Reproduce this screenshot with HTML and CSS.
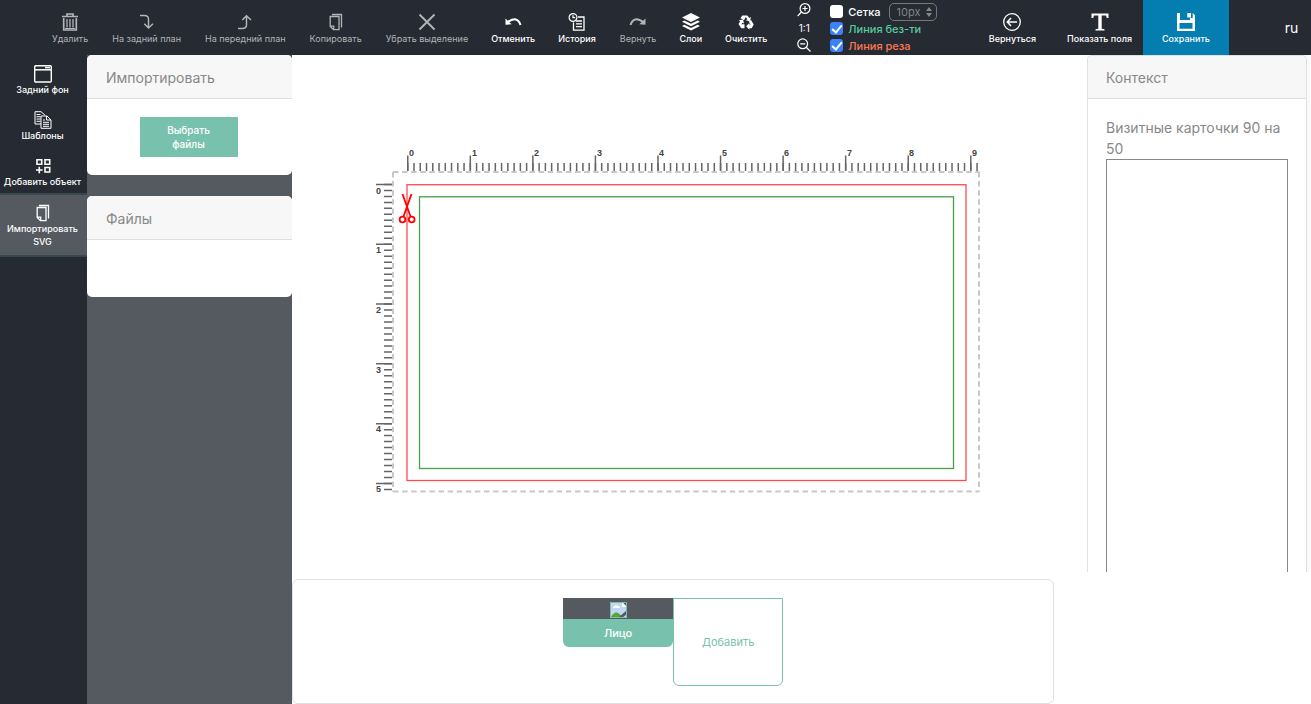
FILE: index.html
```html
<!DOCTYPE html>
<html lang="ru">
<head>
<meta charset="utf-8">
<title>Редактор визитных карточек</title>
<link rel="stylesheet" href="styles.css">
</head>
<body>
<header class="toolbar">
  <div class="tools">
    <button class="tool muted" type="button">
      <svg class="icon" viewBox="0 0 18 18"><path d="M1 3.500h16M6 3V1h6v2M2.700 5v12h12.600V5" stroke-width="1.700"/><path d="M6 6v8.500M9 6v8.500M12 6v8.500" stroke-width="1.300"/><path d="M4 15.500h10"/></svg>
      <span>Удалить</span></button>
    <button class="tool muted" type="button">
      <svg class="icon" viewBox="0 0 18 18"><path d="M2 2.500h4.500q4 0 4 4V15M6.300 10.800l4.200 4.200 4.500-4.200" stroke-width="1.500"/></svg>
      <span>На задний план</span></button>
    <button class="tool muted" type="button">
      <svg class="icon" viewBox="0 0 18 18"><path d="M2 15.500h4.500q4 0 4-4V3M6.300 7l4.200-4.200L15 7" stroke-width="1.500"/></svg>
      <span>На передний план</span></button>
    <button class="tool muted" type="button">
      <svg class="icon" viewBox="0 0 18 18"><path d="M3.200 3.500H12v13.200H6.500L3.200 13.500zM3.200 13.200h3.500v3.500M5 1.500h9.500v13" stroke-width="1.300"/></svg>
      <span>Копировать</span></button>
    <button class="tool muted" type="button">
      <svg class="icon" viewBox="0 0 18 18"><path d="M1.500 1.500l15 15M16.500 1.500l-15 15" stroke-width="1.900"/></svg>
      <span>Убрать выделение</span></button>
    <button class="tool strong" type="button">
      <svg class="icon" viewBox="0 0 18 18"><path d="M3.500 9.300Q13.500 2.200 16.500 12" stroke-width="2"/><path class="solid" d="M1.500 5.600v6.200l6.200-.5z"/></svg>
      <span>Отменить</span></button>
    <button class="tool strong" type="button">
      <svg class="icon" viewBox="0 0 18 18"><circle cx="5" cy="4.500" r="3.900" stroke-width="1.200"/><path d="M5 2.200v2.500h2.200M10 4h6v13.200H5.500V9.500M8 8h6M8 10.800h6M8 13.600h6" stroke-width="1.300"/></svg>
      <span>История</span></button>
    <button class="tool muted" type="button">
      <svg class="icon" viewBox="0 0 18 18"><path d="M14.500 9.300Q4.500 2.200 1.500 12" stroke-width="2"/><path class="solid" d="M16.500 5.600v6.200l-6.200-.5z"/></svg>
      <span>Вернуть</span></button>
    <button class="tool strong" type="button">
      <svg class="icon" viewBox="0 0 18 18"><path class="solid" d="M9 0l9 4.500L9 9 0 4.500zM0 8.700l2.400-1.200L9 10.700l6.600-3.200L18 8.700l-9 4.500zM0 12.900l2.400-1.200L9 14.900l6.600-3.200 2.400 1.200-9 4.600z"/></svg>
      <span>Слои</span></button>
    <button class="tool strong" type="button">
      <svg class="icon" viewBox="0 0 18 18"><path class="solid" d="M5.300 2.500h5l2 2.400 1.700-.8-1 4.200-4.300-1.100 1.600-.9-1.500-2.200L7 7.200 3.500 5.300zM1.700 7.200l4.300-.6 1 4-1.600-.8-.9 1.500h3v4H4.200L1.500 11l1.700-2.800zM14 7l2.700 4.500-2 3.800h-2.300v1.400L9.100 13.300l3.300-3.200v1.400h1.300l-2-3z"/></svg>
      <span>Очистить</span></button>
  </div>
  <div class="zoom">
    <button type="button" aria-label="Увеличить"><svg class="lens" viewBox="0 0 14 14"><circle cx="8" cy="5.500" r="4.900"/><path d="M4.500 9L.7 13M5.500 5.500h5M8 3v5"/></svg></button>
    <button type="button">1:1</button>
    <button type="button" aria-label="Уменьшить"><svg class="lens" viewBox="0 0 14 14"><circle cx="5.700" cy="5.800" r="4.900"/><path d="M9.200 9.300L13.500 13.500M3.200 5.800h5"/></svg></button>
  </div>
  <div class="options">
    <div class="option"><input type="checkbox" id="grid"><label for="grid">Сетка</label>
      <span class="size"><select aria-label="Шаг сетки" disabled><option>10px</option></select>
        <svg class="arrows" viewBox="0 0 6 10"><path d="M0 4l3-4 3 4zM0 6h6l-3 4z"/></svg></span></div>
    <div class="option safe"><input type="checkbox" id="safe" checked><label for="safe">Линия без-ти</label></div>
    <div class="option cut"><input type="checkbox" id="cut" checked><label for="cut">Линия реза</label></div>
  </div>
  <div class="actions">
    <button class="tool strong" type="button">
      <svg class="icon" viewBox="0 0 18 18"><circle cx="9" cy="9" r="8.300" stroke-width="1.300"/><path d="M14 9H4.500M8 5L4.300 9 8 13" stroke-width="1.500"/></svg>
      <span>Вернуться</span></button>
    <button class="tool strong fields" type="button">
      <svg class="icon" viewBox="0 0 18 18"><path class="solid" d="M.5.500h17V5h-1.700L15 2.500h-4.300v13.200l2.800.5v1.300h-9v-1.300l2.800-.5V2.500H3L2.200 5H.5z"/></svg>
      <span>Показать поля</span></button>
    <button class="tool strong save" type="button">
      <svg class="icon" viewBox="0 0 18 18"><path class="solid" fill-rule="evenodd" d="M0 0h3v7h10V5h2.700V0L18 2.300V18H0zM2.500 10v5.800h13V10zM10.300 0H14v4.500h-3.700z"/></svg>
      <span>Сохранить</span></button>
    <button class="lang" type="button">ru</button>
  </div>
</header>

<div class="workspace">
  <nav class="rail">
    <button class="rail-item" type="button">
      <svg class="icon" viewBox="0 0 18 18"><rect x=".7" y=".7" width="16.600" height="16.300" rx="1" stroke-width="1.400"/><path d="M1 4.800h16" stroke-width="1.500"/><path d="M11 2.600h5" stroke-width="1.500"/></svg>
      <span>Задний фон</span></button>
    <button class="rail-item" type="button">
      <svg class="icon" viewBox="0 0 18 18"><path d="M7 13H1V.7h6l4 3.500M2.500 3.500h4M2.500 5.700h4M2.500 8h4M2.500 10.300h4M7 5h6l4 4v8.300H7zM12.500 5v4H17M9 9h2M9 11.300h6M9 13.300h6M9 15.300h6"/></svg>
      <span>Шаблоны</span></button>
    <button class="rail-item" type="button">
      <svg class="icon" viewBox="0 0 18 18"><path d="M3 2.700h4.700v4.500H3zM11 2.700h4.700v4.500H11zM11 10.500h4.700V15H11zM5.300 9.700v6.600M2 13h6.600" stroke-width="1.600"/></svg>
      <span>Добавить объект</span></button>
    <button class="rail-item current" type="button">
      <svg class="icon" viewBox="0 0 18 18"><path d="M3.200 3.500H12v13.200H6.500L3.200 13.500zM3.200 13.200h3.500v3.500M5 1.500h9.500v13" stroke-width="1.300"/></svg>
      <span>Импортировать SVG</span></button>
  </nav>

  <aside class="panel">
    <section class="card">
      <h2>Импортировать</h2>
      <div class="card-body"><button class="pick" type="button">Выбрать файлы</button></div>
    </section>
    <section class="card">
      <h2>Файлы</h2>
      <div class="card-body files"></div>
    </section>
  </aside>

  <main class="main">
    <div class="upper">
      <div class="stage">
        <svg class="board" viewBox="375 147 607 347" role="img" aria-label="Макет визитки">
          <g class="ticks">
            <path d="M407 167h571" stroke-width="8" stroke-dasharray="1.500 4.756"/>
            <path d="M407 163h565" stroke-width="15" stroke-dasharray="1.500 61.060"/>
            <path d="M388 183.700v307" stroke-width="8" stroke-dasharray="1.500 4.480"/>
            <path d="M384 183.700v301" stroke-width="16" stroke-dasharray="1.500 58.300"/>
          </g>
          <g class="digits">
            <text x="409" y="156">0</text><text x="472" y="156">1</text><text x="534" y="156">2</text><text x="597" y="156">3</text><text x="659" y="156">4</text><text x="722" y="156">5</text><text x="784" y="156">6</text><text x="847" y="156">7</text><text x="909" y="156">8</text><text x="972" y="156">9</text>
            <text x="376" y="194">0</text><text x="376" y="253">1</text><text x="376" y="313">2</text><text x="376" y="373">3</text><text x="376" y="432">4</text><text x="376" y="492">5</text>
          </g>
          <path class="bleed" d="M393 172h586.500M393 491.500h586.500M393 172v319.500M979 172v319.500"/>
          <rect class="cut-line" x="407" y="184.700" width="559" height="295.800"/>
          <rect class="safe-line" x="419.500" y="196.800" width="534" height="271.700"/>
          <g class="scissors"><path d="M402.500 194l8 22.500M411.500 194l-8 22.500"/><circle cx="402.500" cy="219.500" r="2.900"/><circle cx="411.700" cy="219.500" r="2.900"/></g>
        </svg>
      </div>
      <aside class="context">
        <h2>Контекст</h2>
        <div class="context-body">
          <p>Визитные карточки 90 на 50</p>
          <div class="preview"></div>
        </div>
      </aside>
    </div>
    <section class="pages">
      <button class="page" type="button">
        <span class="thumb"><svg viewBox="0 0 17 16"><path fill="#c3d7f5" d="M0 0h17v16H0z"/><path fill="#fff" d="M3 6q0-2 2-2 1-2 3 0 2 0 2 2z"/><path fill="#55a72d" d="M1 15q5-9 11 0z"/><path fill="#555960" d="M12 0h5v5zM17 8v4l-5 4H8z"/><path fill="#fff" d="M12 0v5h5z"/><path fill="none" stroke="#78c2ad" d="M.5.500h16v15H.5z"/></svg></span>
        <span class="page-name">Лицо</span>
      </button>
      <button class="add-page" type="button">Добавить</button>
    </section>
  </main>
</div>
</body>
</html>
```
FILE: styles.css
```css
* { box-sizing: border-box; }

body {
  margin: 0;
  min-height: 100vh;
  display: flex;
  flex-direction: column;
  font-family: Inter, "Liberation Sans", sans-serif;
  font-size: 14px;
  color: #888;
  background: #fff;
}

button {
  margin: 0;
  padding: 0;
  border: 0;
  background: none;
  color: inherit;
  font: inherit;
}

svg { display: block; }
.icon, .lens { fill: none; stroke: currentColor; }
.icon { width: 18px; height: 18px; }
.icon .solid { fill: currentColor; stroke: none; }
.lens { width: 14px; height: 14px; stroke-width: 1.2; }

/* Top toolbar */
.toolbar {
  display: flex;
  height: 55px;
  padding-left: 40px;
  background: #262a32;
  color: #fff;
}
.tools, .actions { display: flex; }
.tool {
  display: flex;
  flex-direction: column;
  align-items: center;
  padding: 13px 12px 0;
  font-size: 9px;
  line-height: 15px;
  white-space: nowrap;
}
.muted { color: #b2b4b8; }
.strong { font-weight: 500; }
.tools .strong { padding-left: 11px; }
.zoom {
  display: flex;
  flex-direction: column;
  align-items: center;
  justify-content: space-between;
  width: 20px;
  margin-left: 15px;
  padding: 3px 0;
  font-size: 10px;
  line-height: 12px;
}
.options {
  display: flex;
  flex-direction: column;
  margin-left: 16px;
  padding-top: 3px;
}
.option {
  display: flex;
  align-items: center;
  gap: 5px;
  height: 17px;
  font-size: 11px;
}
.option label { font-weight: 500; }
.option input {
  appearance: none;
  width: 13px;
  height: 13px;
  margin: 0;
  border-radius: 3px;
  background: #fff;
}
.option input:checked {
  background: #3b82f6;
}
.option input:checked::after {
  content: "";
  display: block;
  width: 4px;
  height: 8px;
  margin: 1px auto;
  border: solid #fff;
  border-width: 0 2px 2px 0;
  transform: rotate(40deg);
}
.safe { color: #56cc9d; }
.cut { color: #ff7851; }
.size { position: relative; margin-left: 3px; }
.size select {
  display: block;
  appearance: none;
  width: 48px;
  height: 18px;
  padding: 0 7px;
  border: 1px solid #777;
  border-radius: 5px;
  background: none;
  color: #818488;
  font: inherit;
  opacity: 1;
}
.arrows {
  position: absolute;
  right: 5px;
  top: 4px;
  width: 6px;
  height: 10px;
  fill: #888;
}
.actions { margin-left: auto; }
.fields { margin-left: 7px; }
.save { width: 86px; background: #047db1; }
.actions .fields { padding-right: 11px; }
.lang { width: 82px; padding-left: 43px; }

/* Columns */
.workspace { display: flex; flex: 1; }
.rail { width: 87px; background: #262a32; color: #fff; }
.rail-item {
  display: flex;
  flex-direction: column;
  align-items: center;
  width: 100%;
  padding: 10px 5px 5px 3px;
  font-size: 9px;
  font-weight: 500;
  line-height: 13px;
}
.rail-item.current {
  padding-top: 9px;
  padding-bottom: 7px;
  border: solid #37494d;
  border-width: 2px 0;
  background: #555960;
}

.panel {
  display: flex;
  flex-direction: column;
  gap: 21px;
  width: 205px;
  background: #555960;
}
h2 {
  margin: 0;
  padding: 12px 19px 10px;
  border-bottom: 1px solid #dfdfdf;
  background: #f7f7f7;
  font-size: 14px;
  font-weight: 400;
  line-height: 21px;
}
.card { overflow: hidden; border-radius: 5px; background: #fff; }
.card-body { display: flex; justify-content: center; padding: 18px 20px 18px 18px; }
.files { height: 57px; }
.pick {
  width: 98px;
  padding: 6px 20px;
  background: #78c2ad;
  color: #fff;
  font-size: 10px;
  font-weight: 500;
  line-height: 14px;
}

.main { display: flex; flex: 1; flex-direction: column; min-width: 0; }
.upper { display: flex; flex: 1; margin-bottom: 7px; }
.stage { flex: 1; padding: 92px 0 0 83px; }
.board { width: 607px; max-width: 100%; }
.ticks { fill: none; stroke: #666; }
.digits { fill: #444; font: 700 9px "Liberation Sans", sans-serif; }
.bleed { fill: none; stroke: #c8c8c8; stroke-width: 2; stroke-dasharray: 5.5 3.6; }
.cut-line { fill: none; stroke: #ff4b50; stroke-width: 1.3; }
.safe-line { fill: none; stroke: #48a048; stroke-width: 1.3; }
.scissors { fill: none; stroke: #f00; stroke-width: 1.8; }

.context {
  display: flex;
  flex-direction: column;
  width: 220px;
  margin-right: 4px;
  border: 1px solid #dfdfdf;
  border-bottom: 0;
  border-radius: 5px 5px 0 0;
  box-shadow: 4px 0 0 #fafafa;
}
.context h2 { padding: 11px 18px 10px; border-radius: 5px 5px 0 0; }
.context-body {
  display: flex;
  flex: 1;
  flex-direction: column;
  padding: 18px 18px 0;
}
.context p { margin: 0; line-height: 21px; }
.preview { flex: 1; border: 1px solid #888; border-bottom: 0; }

/* Page strip */
.pages {
  display: flex;
  justify-content: center;
  align-items: flex-start;
  width: calc(75% - 2px);
  padding: 18px 18px 17px;
  border: 1px solid #dfdfdf;
  border-radius: 6px;
  font-size: 11px;
}
.page, .add-page { width: 110px; }
.page {
  overflow: hidden;
  border-radius: 0 0 6px 6px;
  background: #78c2ad;
  color: #fff;
}
.thumb {
  display: flex;
  justify-content: center;
  height: 21px;
  padding-top: 4px;
  background: #555960;
}
.thumb svg { width: 17px; height: 16px; }
.page-name { display: block; font-weight: 500; line-height: 28px; }
.add-page {
  height: 88px;
  border: 1px solid #78c2ad;
  border-radius: 0 0 6px 6px;
  color: #78c2ad;
}
```
